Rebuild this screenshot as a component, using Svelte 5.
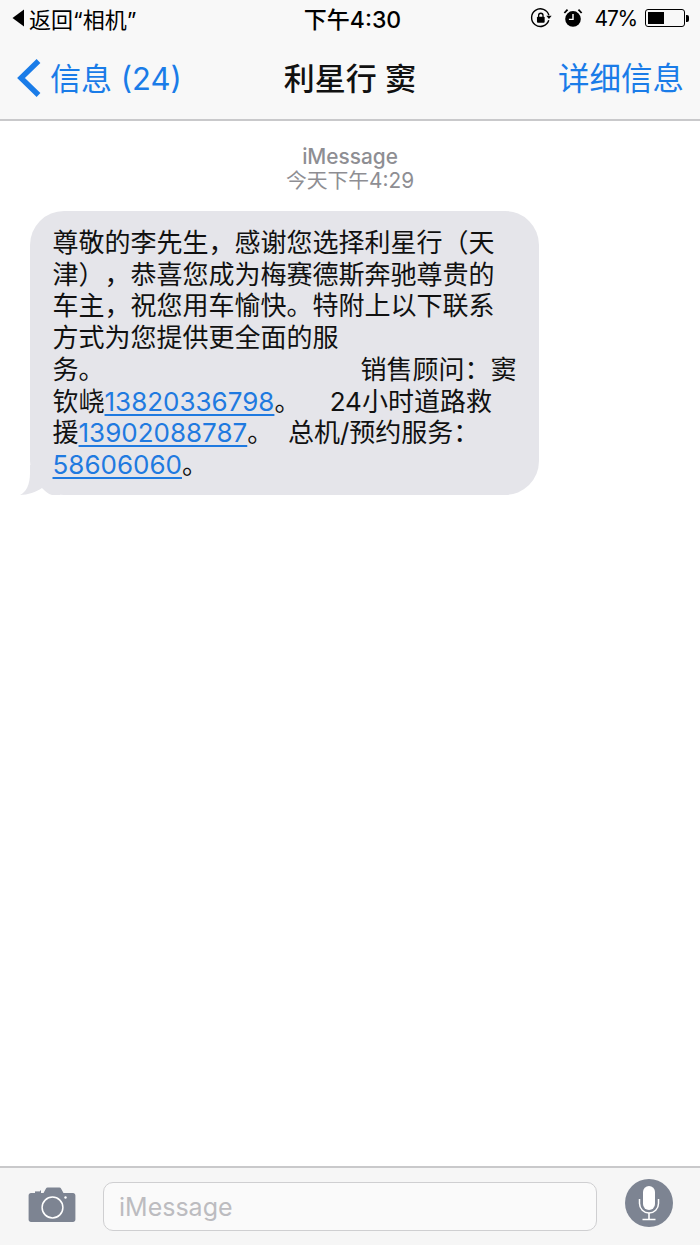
<script>
    const batteryLevel = 47;
</script>

<div class="phone">
    <header class="top">
        <div class="status">
            <div class="status-left">
                <svg class="back-tri" width="13" height="18" viewBox="0 0 13 18"><path d="M12 0.5V17.5L0.5 9Z" fill="#000"/></svg>
                <span>返回“相机”</span>
            </div>
            <div class="status-time">下午4:30</div>
            <div class="status-right">
                <svg width="22" height="22" viewBox="0 0 24 24" fill="none">
                    <path d="M20.5 14.5A9.6 9.6 0 1 1 20.6 9" stroke="#000" stroke-width="1.5"/>
                    <path d="M17.8 9.5H23.6L20.7 13.2Z" fill="#000"/>
                    <rect x="7.6" y="10.5" width="8.4" height="6.6" rx="1" fill="#000"/>
                    <path d="M9.4 11V9.2A2.4 2.4 0 0 1 14.2 9.2V11" stroke="#000" stroke-width="1.4"/>
                </svg>
                <svg class="alarm" width="20" height="22" viewBox="0 0 22 24" fill="none">
                    <circle cx="11" cy="13" r="8.6" fill="#000"/>
                    <path d="M11 7.5V13.5H6.5" stroke="#fff" stroke-width="1.6"/>
                    <path d="M1.5 6.5L5 2.8M20.5 6.5L17 2.8" stroke="#000" stroke-width="2"/>
                </svg>
                <span class="pct">{batteryLevel}%</span>
                <div class="battery"><div class="battery-fill" style="width: {batteryLevel}%"></div></div>
                <div class="battery-tip"></div>
            </div>
        </div>
        <nav class="nav">
            <div class="nav-back">
                <svg width="26" height="40" viewBox="0 0 26 40" fill="none"><path d="M22.5 3L5 20L22.5 37" stroke="#1a7ce8" stroke-width="5.4"/></svg>
                <span>信息 (24)</span>
            </div>
            <div class="nav-title">利星行 窦</div>
            <div class="nav-link">详细信息</div>
        </nav>
    </header>

    <main class="thread">
        <div class="meta">
            <div class="meta-service">iMessage</div>
            <div>今天下午4:29</div>
        </div>
        <div class="bubble">
            <svg class="tail" width="40" height="30" viewBox="0 0 40 30"><path d="M10 0H40V30H32C28 29 25 26 22 23C16 27 8 30 0 30C6 27 10 20 10 8Z" fill="#e5e5ea"/></svg>
            <p>尊敬的李先生，感谢您选择利星行（天<br>津），恭喜您成为梅赛德斯奔驰尊贵的<br>车主，祝您用车愉快。特附上以下联系<br>方式为您提供更全面的服<br>务。                                   销售顾问：窦<br>钦峣<a href="#a">13820336798</a>。    24小时道路救<br>援<a href="#b">13902088787</a>。  总机/预约服务：<br><a href="#c">58606060</a>。</p>
        </div>
    </main>

    <footer class="composer">
        <svg class="camera" width="48" height="36" viewBox="0 0 48 36" fill="none">
            <path d="M3 6H7V3.6H13V6H15.5L18 1.5C18.3 1 18.8 .6 19.6 .6H31.4C32.2 .6 32.7 1 33 1.5L35.5 6H45C46.4 6 47.4 7 47.4 8.4V32.6C47.4 34 46.4 35 45 35H3C1.6 35 .6 34 .6 32.6V8.4C.6 7 1.6 6 3 6Z" fill="#7d8492"/>
            <circle cx="24.5" cy="20.5" r="10.4" stroke="#fff" stroke-width="1.5"/>
            <circle cx="37.5" cy="10.5" r="1.2" fill="#fff"/>
            <rect x="6" y="3" width="6" height="1.4" fill="#f7f7f7"/>
        </svg>
        <div class="input">iMessage</div>
        <div class="mic">
            <svg width="26" height="36" viewBox="0 0 26 36" fill="none">
                <rect x="7" y="1" width="12" height="24" rx="6" fill="#fff"/>
                <path d="M3.5 14V18.5A9.5 9.5 0 0 0 22.5 18.5V14" stroke="#fff" stroke-width="1.5"/>
                <path d="M13 28V34.5M6.5 34.5H19.5" stroke="#fff" stroke-width="1.6"/>
            </svg>
        </div>
    </footer>
</div>

<style>
    :global(body) {
        margin: 0;
        background: #fff;
    }

    .phone {
        width: 700px;
        height: 1245px;
        display: flex;
        flex-direction: column;
        overflow: hidden;
        font-family: Inter, "Noto Sans CJK SC", sans-serif;
        text-spacing-trim: space-all;
        color: #000;
    }

    .top {
        background: #f8f8f8;
        border-bottom: 2px solid #c9c9cb;
        height: 119px;
        flex: none;
    }

    .status {
        height: 36px;
        display: grid;
        grid-template-columns: 1fr auto 1fr;
        align-items: center;
        font-size: 22px;
        padding: 0 11px 0 12px;
    }

    .status-left {
        display: flex;
        align-items: center;
        gap: 4px;
    }

    .status-time {
        font-weight: 500;
        font-size: 23px;
        margin-left: 4px;
    }

    .status-right {
        display: flex;
        align-items: center;
        justify-content: flex-end;
    }

    .alarm {
        margin-left: 11px;
    }

    .pct {
        margin-left: 12px;
        margin-right: 8px;
        font-size: 21px;
        letter-spacing: -1.2px;
    }

    .battery {
        width: 40px;
        height: 18px;
        box-sizing: border-box;
        border: 1.5px solid #000;
        border-radius: 3px;
        padding: 2px;
    }

    .battery-fill {
        height: 100%;
        background: #000;
    }

    .battery-tip {
        width: 3px;
        height: 7px;
        background: #000;
        margin-left: 1px;
        border-radius: 0 2px 2px 0;
    }

    .nav {
        height: 80px;
        display: grid;
        grid-template-columns: 1fr auto 1fr;
        align-items: center;
        padding: 0 16px;
        font-size: 31px;
        color: #1a7ce8;
    }

    .nav-back {
        display: flex;
        align-items: center;
        gap: 8px;
    }

    .nav-back svg {
        margin-top: 4px;
    }

    .nav-title {
        color: #111;
        font-weight: 500;
    }

    .nav-link {
        text-align: right;
        font-size: 31.5px;
    }

    .thread {
        flex: 1;
        background: #fff;
        padding: 24px 0 0;
    }

    .meta {
        text-align: center;
        color: #8e8e93;
        font-size: 20.8px;
        line-height: 24px;
    }

    .meta-service {
        font-weight: 500;
    }

    .bubble {
        position: relative;
        width: 509px;
        margin: 18px 0 0 30px;
        box-sizing: border-box;
        padding: 16px 20px 14px 22.5px;
        background: #e5e5ea;
        border-radius: 34px;
        font-size: 26px;
        line-height: 31.7px;
        color: #111;
    }

    .bubble p {
        position: relative;
        margin: 0;
        white-space: pre;
    }

    .bubble a {
        color: #1f7ae0;
        text-decoration: underline;
        text-decoration-thickness: 2px;
        text-underline-offset: 3px;
    }

    .tail {
        position: absolute;
        left: -10px;
        bottom: 0;
    }

    .composer {
        flex: none;
        height: 79px;
        background: #f6f6f6;
        border-top: 2px solid #c9c9cb;
        display: flex;
        align-items: flex-start;
        padding: 0 27px 0 28px;
        box-sizing: border-box;
    }

    .camera {
        flex: none;
        margin-top: 19px;
    }

    .input {
        width: 496px;
        height: 49px;
        box-sizing: border-box;
        margin: 14px 0 0 27px;
        padding-left: 15px;
        border: 1.5px solid #cfcfd1;
        border-radius: 10px;
        background: #fafafa;
        color: #bcbcc0;
        font-size: 25px;
        line-height: 49px;
    }

    .mic {
        width: 48px;
        height: 48px;
        border-radius: 50%;
        background: #7d8492;
        margin: 11px 0 0 28px;
        display: flex;
        align-items: center;
        justify-content: center;
        flex: none;
    }
</style>
